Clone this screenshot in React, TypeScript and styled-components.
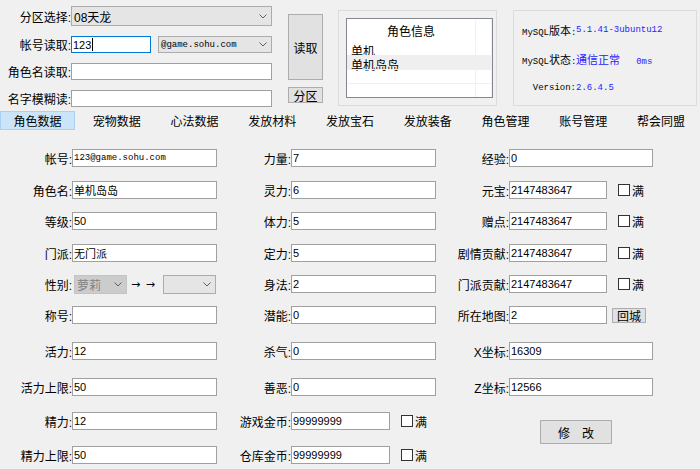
import React from "react";
import styled, { createGlobalStyle } from "styled-components";

const GlobalStyle = createGlobalStyle`
  html, body {
    margin: 0;
    padding: 0;
    background: #f0f0f0;
  }
  body {
    font-family: "Liberation Sans", "Noto Sans CJK SC", sans-serif;
    font-size: 12px;
    color: #000;
  }
`;

const Window = styled.div`
  width: 700px;
  height: 469px;
  overflow: hidden;
  background: #f0f0f0;
  display: flex;
  flex-direction: column;
`;

const TopArea = styled.div`
  height: 110px;
  display: flex;
  align-items: flex-start;
`;

const ReadForm = styled.div`
  width: 272px;
  padding-top: 6px;
  display: flex;
  flex-direction: column;
  gap: 10px;
`;

const ReadRow = styled.div<{ $h: number }>`
  height: ${p => p.$h}px;
  display: flex;
  align-items: center;
`;

const ReadLabel = styled.span`
  width: 71px;
  flex-shrink: 0;
  text-align: right;
  white-space: nowrap;
  font-size: 12px;
`;

const Combo = styled.div<{ $w: number; $h: number; $disabled?: boolean; $mono?: boolean; $gap?: number }>`
  box-sizing: border-box;
  width: ${p => p.$w}px;
  height: ${p => p.$h}px;
  margin-left: ${p => p.$gap ?? 0}px;
  flex-shrink: 0;
  border: 1px solid ${p => (p.$disabled ? "#c4c4c4" : "#acacac")};
  background: ${p => (p.$disabled ? "#cccccc" : "#e5e5e5")};
  color: ${p => (p.$disabled ? "#838383" : "#000")};
  display: flex;
  align-items: center;
  justify-content: space-between;
  padding: 0 4px 0 2px;
  font-family: ${p =>
    p.$mono ? `"Liberation Mono", "Noto Sans CJK SC", monospace` : `"Liberation Sans", "Noto Sans CJK SC", sans-serif`};
  font-size: ${p => (p.$mono ? 9 : 12)}px;
  white-space: nowrap;
`;

const TextBox = styled.div<{ $w: number; $h?: number; $mono?: boolean; $focus?: boolean }>`
  box-sizing: border-box;
  width: ${p => p.$w}px;
  height: ${p => p.$h ?? 18}px;
  flex-shrink: 0;
  border: 1px solid ${p => (p.$focus ? "#0078d7" : "#a0a0a0")};
  background: #fff;
  display: flex;
  align-items: center;
  padding-left: 1px;
  font-family: ${p =>
    p.$mono ? `"Liberation Mono", "Noto Sans CJK SC", monospace` : `"Liberation Sans", "Noto Sans CJK SC", sans-serif`};
  font-size: ${p => (p.$mono ? 9 : 11)}px;
  white-space: nowrap;
  overflow: hidden;
`;

const Caret = styled.span`
  display: inline-block;
  width: 1px;
  height: 13px;
  background: #000;
  margin-left: 1px;
`;

const Gap = styled.span<{ $w: number }>`
  display: inline-block;
  width: ${p => p.$w}px;
  flex-shrink: 0;
`;

const SideButtons = styled.div`
  margin-left: 16px;
  padding-top: 14px;
  width: 35px;
  display: flex;
  flex-direction: column;
  gap: 7px;
`;

const WinButton = styled.div<{ $w?: number; $h: number }>`
  box-sizing: border-box;
  width: ${p => (p.$w ? `${p.$w}px` : "100%")};
  height: ${p => p.$h}px;
  flex-shrink: 0;
  background: #e1e1e1;
  border: 1px solid #adadad;
  display: flex;
  align-items: center;
  justify-content: center;
  font-size: 12px;
  white-space: pre;
`;

const GroupBox = styled.div<{ $w: number; $left: number }>`
  box-sizing: border-box;
  margin-left: ${p => p.$left}px;
  margin-top: 10px;
  width: ${p => p.$w}px;
  height: 96px;
  border: 1px solid #dcdcdc;
`;

const ListBox = styled.div`
  box-sizing: border-box;
  margin: 7px 3px 0 7px;
  height: 80px;
  border: 1px solid #828790;
  background: #fff;
  display: flex;
  flex-direction: column;
  overflow: hidden;
`;

const ListRow = styled.div<{ $h: number; $selected?: boolean; $line?: boolean }>`
  height: ${p => p.$h}px;
  flex-shrink: 0;
  display: grid;
  grid-template-columns: 129px 1fr;
  background: ${p => (p.$selected ? "#efefef" : "transparent")};
  border-top: 1px solid ${p => (p.$line ? "#f0f0f0" : "transparent")};
  box-sizing: border-box;
`;

const ListCell = styled.div<{ $center?: boolean }>`
  border-right: 1px solid #f0f0f0;
  display: flex;
  align-items: center;
  justify-content: ${p => (p.$center ? "center" : "flex-start")};
  padding-left: ${p => (p.$center ? 0 : 4)}px;
  font-size: 12px;
  white-space: nowrap;
`;

const InfoGrid = styled.div`
  display: grid;
  grid-template-columns: 54px auto;
  grid-auto-rows: 15px;
  row-gap: 14px;
  padding: 11px 0 0 8px;
  font-family: "Liberation Mono", "Noto Sans CJK SC", monospace;
  font-size: 9px;
  align-items: center;
`;

const InfoKey = styled.span`
  text-align: right;
  white-space: nowrap;
`;

const InfoValue = styled.span`
  color: #2424ff;
  white-space: pre;
`;

const Cjk = styled.span`
  font-family: "Noto Sans CJK SC", sans-serif;
  font-size: 11px;
`;

const TabBar = styled.div`
  margin-top: 1px;
  height: 19px;
  display: grid;
  grid-template-columns: repeat(9, 1fr);
`;

const Tab = styled.div<{ $active?: boolean }>`
  box-sizing: border-box;
  display: flex;
  align-items: center;
  justify-content: center;
  font-size: 12px;
  background: ${p => (p.$active ? "#cce4f7" : "transparent")};
  border: 1px solid ${p => (p.$active ? "#a9d1f3" : "transparent")};
  margin-right: ${p => (p.$active ? 3 : 0)}px;
`;

const FormGrid = styled.div`
  padding-top: 19px;
  display: grid;
  grid-auto-flow: column;
  grid-template-columns: 219px 218px 1fr;
  grid-template-rows: 32px 31px 32px 31px 31px 36px 36px 34px 34px 18px;
`;

const Field = styled.div`
  height: 18px;
  display: flex;
  align-items: center;
`;

const FieldLabel = styled.span`
  width: 72px;
  flex-shrink: 0;
  text-align: right;
  white-space: nowrap;
  font-size: 12px;
`;

const CheckBox = styled.span`
  box-sizing: border-box;
  width: 12px;
  height: 12px;
  margin-left: 11px;
  border: 1px solid #333;
  background: #fff;
  flex-shrink: 0;
`;

const CheckText = styled.span`
  margin-left: 2px;
  font-size: 12px;
`;

const Arrows = styled.span`
  margin: 0 7px 0 4px;
  font-size: 11px;
  font-family: "DejaVu Sans", sans-serif;
  letter-spacing: 1px;
`;

const SubmitCell = styled.div`
  grid-row: span 2;
  padding: 8px 0 0 103px;
`;

const Chevron = () => (
  <svg width="8" height="5" viewBox="0 0 8 5">
    <polyline points="0.5,0.5 4,4 7.5,0.5" fill="none" stroke="#606060" strokeWidth="1" />
  </svg>
);

type FieldDef = {
  label: string;
  value?: string;
  w?: number;
  mono?: boolean;
  check?: boolean;
  action?: string;
};

const col1: FieldDef[] = [
  { label: "帐号:", value: "123@game.sohu.com", mono: true },
  { label: "角色名:", value: "单机岛岛" },
  { label: "等级:", value: "50" },
  { label: "门派:", value: "无门派" },
  { label: "性别:" },
  { label: "称号:", value: "" },
  { label: "活力:", value: "12" },
  { label: "活力上限:", value: "50" },
  { label: "精力:", value: "12" },
  { label: "精力上限:", value: "50" },
];

const col2: FieldDef[] = [
  { label: "力量:", value: "7" },
  { label: "灵力:", value: "6" },
  { label: "体力:", value: "5" },
  { label: "定力:", value: "5" },
  { label: "身法:", value: "2" },
  { label: "潜能:", value: "0" },
  { label: "杀气:", value: "0" },
  { label: "善恶:", value: "0" },
  { label: "游戏金币:", value: "99999999", w: 99, check: true },
  { label: "仓库金币:", value: "99999999", w: 99, check: true },
];

const col3: FieldDef[] = [
  { label: "经验:", value: "0", w: 144 },
  { label: "元宝:", value: "2147483647", w: 98, check: true },
  { label: "赠点:", value: "2147483647", w: 98, check: true },
  { label: "剧情贡献:", value: "2147483647", w: 98, check: true },
  { label: "门派贡献:", value: "2147483647", w: 98, check: true },
  { label: "所在地图:", value: "2", w: 98, action: "回城" },
  { label: "X坐标:", value: "16309", w: 144 },
  { label: "Z坐标:", value: "12566", w: 144 },
];

const tabs = ["角色数据", "宠物数据", "心法数据", "发放材料", "发放宝石", "发放装备", "角色管理", "账号管理", "帮会同盟"];

const FormField: React.FC<{ def: FieldDef }> = ({ def }) => {
  if (def.label === "性别:") {
    return (
      <Field>
        <FieldLabel>{def.label}</FieldLabel>
        <Combo $w={53} $h={19} $gap={2} $disabled>
          萝莉
          <Chevron />
        </Combo>
        <Arrows>→ →</Arrows>
        <Combo $w={53} $h={19}>
          <span />
          <Chevron />
        </Combo>
      </Field>
    );
  }
  return (
    <Field>
      <FieldLabel>{def.label}</FieldLabel>
      <TextBox $w={def.w ?? 145} $mono={def.mono}>
        {def.value}
      </TextBox>
      {def.check && (
        <>
          <CheckBox />
          <CheckText>满</CheckText>
        </>
      )}
      {def.action && (
        <>
          <Gap $w={5} />
          <WinButton $w={34} $h={15}>
            {def.action}
          </WinButton>
        </>
      )}
    </Field>
  );
};

export default function App() {
  return (
    <Window>
      <GlobalStyle />
      <TopArea>
        <ReadForm>
          <ReadRow $h={20}>
            <ReadLabel>分区选择:</ReadLabel>
            <Combo $w={201} $h={20}>
              08天龙
              <Chevron />
            </Combo>
          </ReadRow>
          <ReadRow $h={17}>
            <ReadLabel>帐号读取:</ReadLabel>
            <TextBox $w={80} $h={17} $focus>
              123
              <Caret />
            </TextBox>
            <Combo $w={114} $h={17} $gap={7} $mono>
              @game.sohu.com
              <Chevron />
            </Combo>
          </ReadRow>
          <ReadRow $h={17}>
            <ReadLabel>角色名读取:</ReadLabel>
            <TextBox $w={201} $h={17} />
          </ReadRow>
          <ReadRow $h={17}>
            <ReadLabel>名字模糊读:</ReadLabel>
            <TextBox $w={201} $h={17} />
          </ReadRow>
        </ReadForm>

        <SideButtons>
          <WinButton $h={66}>读取</WinButton>
          <WinButton $h={16}>分区</WinButton>
        </SideButtons>

        <GroupBox $w={159} $left={15}>
          <ListBox>
            <ListRow $h={22}>
              <ListCell $center>角色信息</ListCell>
              <ListCell />
            </ListRow>
            <ListRow $h={14}>
              <ListCell>单机</ListCell>
              <ListCell />
            </ListRow>
            <ListRow $h={14} $selected>
              <ListCell>单机岛岛</ListCell>
              <ListCell />
            </ListRow>
            <ListRow $h={14} $line>
              <ListCell />
              <ListCell />
            </ListRow>
            <ListRow $h={14} $line>
              <ListCell />
              <ListCell />
            </ListRow>
          </ListBox>
        </GroupBox>

        <GroupBox $w={184} $left={16}>
          <InfoGrid>
            <InfoKey>
              MySQL<Cjk>版本</Cjk>:
            </InfoKey>
            <InfoValue>5.1.41-3ubuntu12</InfoValue>
            <InfoKey>
              MySQL<Cjk>状态</Cjk>:
            </InfoKey>
            <InfoValue>
              <Cjk>通信正常</Cjk>   0ms
            </InfoValue>
            <InfoKey>Version:</InfoKey>
            <InfoValue>2.6.4.5</InfoValue>
          </InfoGrid>
        </GroupBox>
      </TopArea>

      <TabBar>
        {tabs.map((t, i) => (
          <Tab key={t} $active={i === 0}>
            {t}
          </Tab>
        ))}
      </TabBar>

      <FormGrid>
        {col1.map(d => (
          <FormField key={d.label} def={d} />
        ))}
        {col2.map(d => (
          <FormField key={d.label} def={d} />
        ))}
        {col3.map(d => (
          <FormField key={d.label} def={d} />
        ))}
        <SubmitCell>
          <WinButton $w={72} $h={24}>
            修　改
          </WinButton>
        </SubmitCell>
      </FormGrid>
    </Window>
  );
}
